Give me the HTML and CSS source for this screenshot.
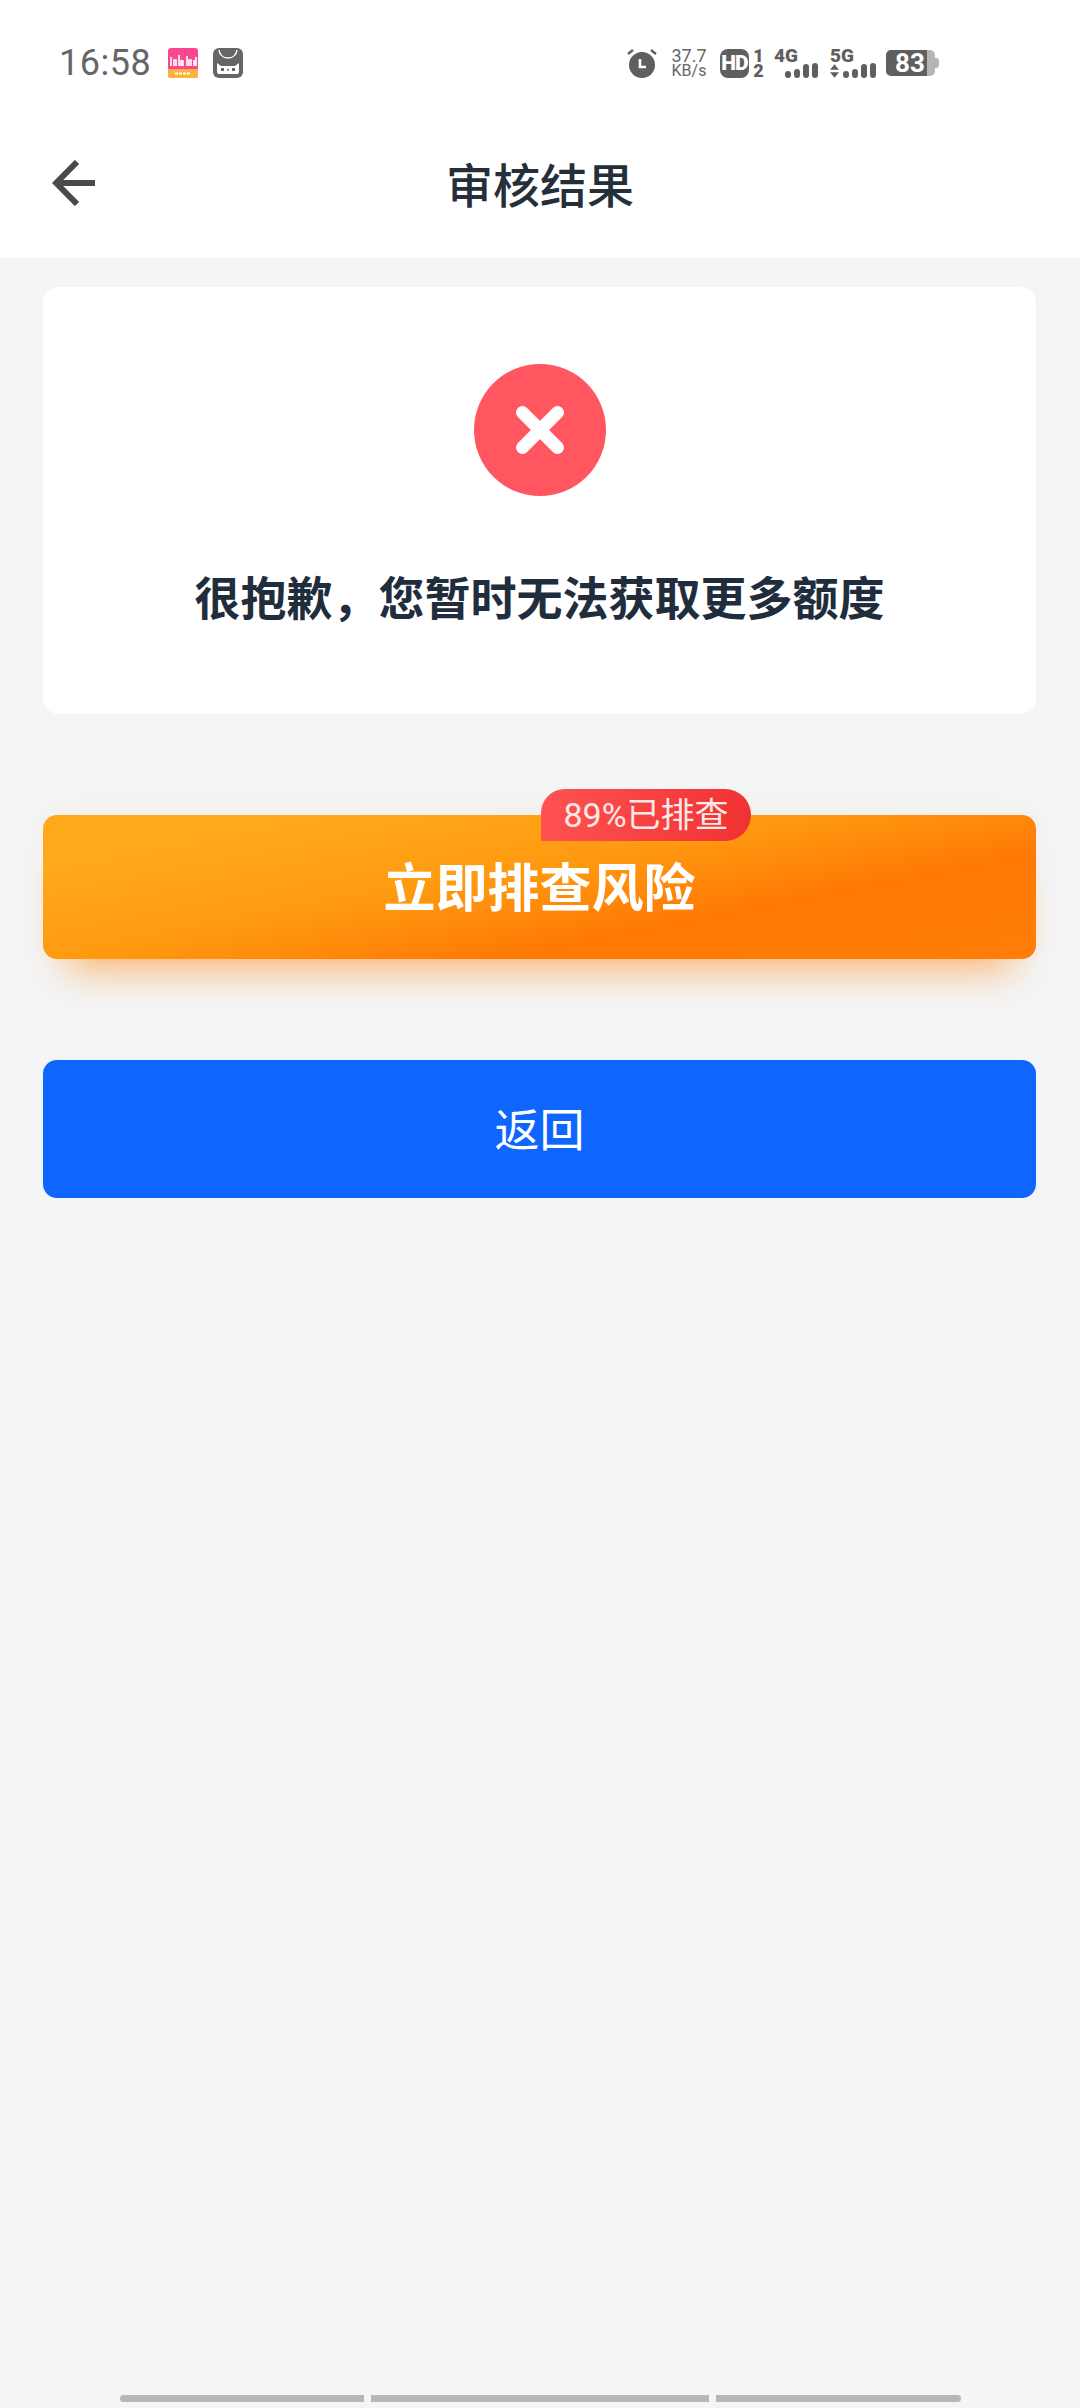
FILE: index.html
```html
<!DOCTYPE html>
<html lang="zh-CN">
<head>
    <meta charset="UTF-8">
    <meta name="viewport" content="width=device-width, initial-scale=1.0">
    <title>审核结果</title>
    <link rel="stylesheet" href="styles.css">
</head>
<body>
    <div id="app">
        <header class="header">
            <div class="status-bar">
                <span class="time">16:58</span>
                <svg class="app-icon app-icon-first" viewBox="0 0 30 30">
                    <rect width="30" height="30" rx="3" fill="#f9488f"/>
                    <path d="M0 21h30v6a3 3 0 0 1-3 3H3a3 3 0 0 1-3-3z" fill="#fdb23c"/>
                    <path d="M3 18V9M6 18v-6h2v6M11 18V7M13 18v-6l2 6v-6M19 18V8M21 18v-6h2v6M26 18v-6l2 6V9" stroke="#fff" stroke-width="1.6" fill="none"/>
                    <path d="M7 25.500h16" stroke="#fff" stroke-width="2" stroke-dasharray="3 1"/>
                </svg>
                <svg class="app-icon" viewBox="0 0 30 30">
                    <rect width="30" height="30" rx="6" fill="#666"/>
                    <path d="M6 2c1 6 4 8 9 8s8-2 9-8" stroke="#fff" stroke-width="1.500" fill="none"/>
                    <path d="M4 15l4 3h14l4-3v9a2 2 0 0 1-2 2H6a2 2 0 0 1-2-2z" fill="#fff"/>
                    <path d="M8 20h3v3H8zM19 20h3v3h-3zM14 21h2v1.500h-2z" fill="#666"/>
                </svg>
                <div class="status-right">
                    <svg class="alarm" viewBox="0 0 30 30">
                        <circle cx="15" cy="17" r="13" fill="#5f5f5f"/>
                        <path d="M1 6l5-4M29 6l-5-4" stroke="#5f5f5f" stroke-width="2.400"/>
                        <path d="M13 11v8h6" stroke="#fff" stroke-width="2.600" fill="none"/>
                    </svg>
                    <div class="speed"><span class="speed-num">37.7</span><span>KB/s</span></div>
                    <div class="hd-group">
                        <span class="hd">HD</span>
                        <div class="sim-nums"><span>1</span><span>2</span></div>
                    </div>
                    <div class="signal signal-4g">
                        <span class="net">4G</span>
                        <div class="bars"><i class="b1"></i><i class="b2"></i><i class="b3"></i><i class="b4"></i></div>
                    </div>
                    <div class="signal signal-5g">
                        <span class="net">5G</span>
                        <svg class="arrows" viewBox="0 0 10 15">
                            <path d="M5 0l5 6H0zM5 15l5-6H0z" fill="#5f5f5f"/>
                        </svg>
                        <div class="bars"><i class="b1"></i><i class="b2"></i><i class="b3"></i><i class="b4"></i></div>
                    </div>
                    <div class="battery">
                        <div class="battery-body"><span>83</span></div>
                        <div class="battery-cap"></div>
                    </div>
                </div>
            </div>
            <nav class="nav">
                <svg class="back" viewBox="0 0 43 46">
                    <path d="M25 2L4.200 23 25 44M4.200 23H43" stroke="#4a4a4a" stroke-width="6" fill="none"/>
                </svg>
                <h1 class="nav-title">审核结果</h1>
            </nav>
        </header>

        <main class="main">
            <section class="result-card">
                <svg class="fail-icon" viewBox="0 0 132 132">
                    <circle cx="66" cy="66" r="66" fill="#ff5660"/>
                    <path d="M48.500 48.500l35 35M83.500 48.500l-35 35" stroke="#fff" stroke-width="13" stroke-linecap="round"/>
                </svg>
                <h2 class="result-text">很抱歉，您暂时无法获取更多额度</h2>
            </section>

            <button class="btn btn-check">
                立即排查风险
                <span class="badge">89%已排查</span>
            </button>
            <button class="btn btn-back">返回</button>
        </main>

        <div class="home-bars">
            <i class="seg seg-left"></i>
            <i class="seg seg-mid"></i>
            <i class="seg seg-right"></i>
        </div>
    </div>
</body>
</html>
```

FILE: styles.css
```css
:root {
    --bg-color: #f4f5f7;
    --text-color: #1f2d3d;
    --icon-color: #5f5f5f;
}

* {
    box-sizing: border-box;
}

body {
    margin: 0;
    background-color: var(--bg-color);
    font-family: Roboto, "Noto Sans CJK SC", sans-serif;
}

#app {
    width: 1080px;
    height: 2408px;
    display: flex;
    flex-direction: column;
}

.header {
    background-color: #fff;
    height: 258px;
}

.status-bar {
    height: 126px;
    padding-left: 59px;
    display: flex;
    align-items: center;
}

.time {
    font-size: 36px;
    color: #666;
    width: 109px;
    letter-spacing: 0.5px;
}

.app-icon {
    width: 30px;
    height: 30px;
}

.app-icon-first {
    margin-right: 15px;
}

.status-right {
    margin-left: 384px;
    display: flex;
    align-items: center;
    color: var(--icon-color);
}

.alarm {
    width: 30px;
    height: 30px;
    margin-right: 14px;
}

.speed {
    width: 36px;
    margin-right: 13px;
    display: flex;
    flex-direction: column;
    font-size: 16px;
    line-height: 15px;
    text-align: center;
    color: #666;
}

.speed-num {
    font-size: 18px;
}

.hd-group {
    display: flex;
    align-items: center;
    margin-right: 9px;
}

.hd {
    width: 29px;
    height: 29px;
    border-radius: 8px;
    background-color: var(--icon-color);
    color: #fff;
    font-size: 21px;
    font-weight: 900;
    line-height: 29px;
    text-align: center;
    letter-spacing: -1px;
}

.sim-nums {
    width: 13px;
    margin-left: 3px;
    display: flex;
    flex-direction: column;
    font-size: 18px;
    font-weight: 900;
    line-height: 15px;
    text-align: center;
}

.signal {
    position: relative;
    height: 30px;
    display: flex;
    align-items: flex-end;
    justify-content: flex-end;
}

.signal-4g {
    width: 44px;
    margin-right: 12px;
}

.signal-5g {
    width: 46px;
    margin-right: 10px;
}

.net {
    position: absolute;
    left: 0;
    top: -2px;
    font-size: 19px;
    font-weight: 900;
    line-height: 20px;
}

.arrows {
    position: absolute;
    left: 0;
    bottom: 0;
    width: 9px;
    height: 14px;
}

.bars {
    display: flex;
    align-items: flex-end;
    gap: 3px;
}

.bars i {
    width: 6px;
    border-radius: 3px;
    background-color: var(--icon-color);
}

.bars .b1 { height: 7px; }
.bars .b2 { height: 9px; }
.bars .b3 { height: 14px; }
.bars .b4 { height: 15px; }

.battery {
    display: flex;
    align-items: center;
}

.battery-body {
    width: 49px;
    height: 26px;
    border-radius: 5px;
    background: linear-gradient(to right, var(--icon-color) 84%, #b5b5b5 84%);
    color: #fff;
    font-size: 26px;
    font-weight: 700;
    line-height: 26px;
    padding-left: 9px;
}

.battery-cap {
    width: 4px;
    height: 10px;
    border-radius: 0 3px 3px 0;
    background-color: #b5b5b5;
}

.nav {
    position: relative;
    height: 116px;
    padding-bottom: 4px;
    display: flex;
    align-items: center;
    justify-content: center;
}

.back {
    position: absolute;
    left: 52px;
    top: 34px;
    width: 43px;
    height: 46px;
}

.nav-title {
    margin: 0;
    font-size: 47px;
    font-weight: 500;
    color: #252f3a;
}

.main {
    flex: 1;
    padding: 29px 44px 0 43px;
    display: flex;
    flex-direction: column;
}

.result-card {
    height: 427px;
    padding-top: 77px;
    border-radius: 16px;
    background-color: #fff;
    display: flex;
    flex-direction: column;
    align-items: center;
}

.fail-icon {
    width: 132px;
    height: 132px;
}

.result-text {
    margin: 70px 0 0;
    font-size: 46px;
    line-height: 66px;
    font-weight: 700;
    color: var(--text-color);
}

.btn {
    display: block;
    width: 993px;
    border: none;
    border-radius: 14px;
    padding: 0;
    color: #fff;
    font-family: inherit;
}

.btn-check {
    position: relative;
    height: 144px;
    margin-top: 101px;
    padding-bottom: 6px;
    font-size: 52px;
    font-weight: 700;
    background: linear-gradient(169deg, #ffa91a 16%, #ff9a10 44%, #ff7a05 68%, #ff7d08 100%);
    box-shadow: 0 34px 40px -24px rgba(255, 135, 10, 0.6), 0 -8px 26px rgba(255, 170, 60, 0.07);
}

.badge {
    position: absolute;
    left: 498px;
    top: -26px;
    width: 210px;
    height: 52px;
    border-radius: 24px 26px 26px 0;
    background: linear-gradient(to right, #ff5252, #f03232);
    font-size: 34px;
    font-weight: 400;
    line-height: 52px;
    color: #fde8e8;
}

.btn-back {
    height: 138px;
    margin-top: 101px;
    padding-bottom: 4px;
    font-size: 45px;
    font-weight: 400;
    background-color: #0f66ff;
}

.home-bars {
    height: 10px;
    margin-bottom: 3px;
    padding-left: 120px;
    display: flex;
    gap: 7px;
}

.seg {
    height: 7px;
    background-color: #b8b8b8;
}

.seg-left {
    width: 244px;
    border-radius: 4px 0 0 4px;
}

.seg-mid {
    width: 338px;
}

.seg-right {
    width: 245px;
    border-radius: 0 4px 4px 0;
}
```
